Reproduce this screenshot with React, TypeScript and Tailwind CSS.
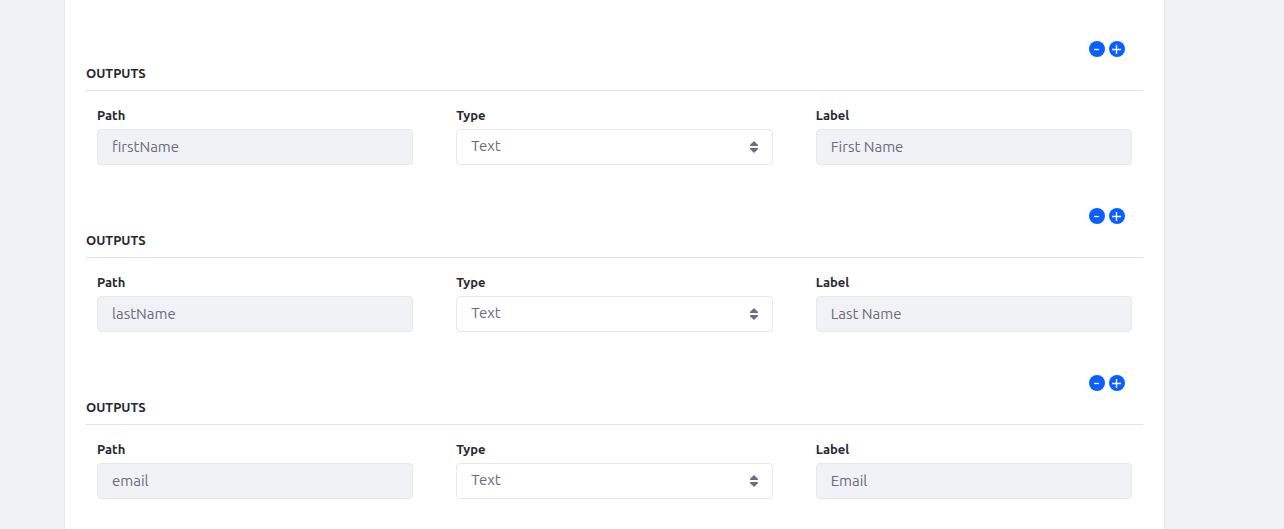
import { useId, useState } from "react";

type Output = { path: string; type: string; label: string };

const initialOutputs: Output[] = [
  { path: "firstName", type: "Text", label: "First Name" },
  { path: "lastName", type: "Text", label: "Last Name" },
  { path: "email", type: "Text", label: "Email" },
];

const labelClass = "mb-1 block text-[13px] leading-5 font-bold text-[#272833]";
const controlClass =
  "h-9 w-full rounded border border-[#e7e7ed] pb-0.5 text-[15px] text-[#6b6c7e] outline-none focus:border-[#80acff]";

function TextField({ label, value }: { label: string; value: string }) {
  const id = useId();
  return (
    <div>
      <label htmlFor={id} className={labelClass}>
        {label}
      </label>
      <input id={id} type="text" defaultValue={value} className={`${controlClass} bg-[#f1f2f5] px-3.5`} />
    </div>
  );
}

function TypeField({ value }: { value: string }) {
  const id = useId();
  return (
    <div>
      <label htmlFor={id} className={labelClass}>
        Type
      </label>
      <div className="relative">
        <select id={id} defaultValue={value} className={`${controlClass} block appearance-none bg-white pr-8 pl-3.5`}>
          <option>Text</option>
        </select>
        <svg
          aria-hidden="true"
          viewBox="0 0 8 12"
          className="pointer-events-none absolute top-3 right-3.5 h-3 w-2.5 fill-[#6b6c7e]"
        >
          <path d="M4 0 7.800 3.700Q8.600 5 7.300 5H.7Q-.6 5 .2 3.700Z" />
          <path d="M4 12 7.800 8.300Q8.600 7 7.300 7H.7Q-.6 7 .2 8.300Z" />
        </svg>
      </div>
    </div>
  );
}

function RoundButton({ kind, onClick }: { kind: "remove" | "add"; onClick: () => void }) {
  return (
    <button
      type="button"
      aria-label={kind === "add" ? "Add output" : "Remove output"}
      onClick={onClick}
      className="size-4 rounded-full bg-[#0b5fff]"
    >
      <svg viewBox="0 0 16 16" fill="none" stroke="white" strokeWidth="1.3" className="size-4">
        {kind === "add" ? <path d="M3 8.500H12M7.500 4V13" /> : <path d="M5 8.500H10" />}
      </svg>
    </button>
  );
}

export default function App() {
  const [outputs, setOutputs] = useState(initialOutputs);
  const remove = (index: number) => setOutputs(outputs.filter((_, i) => i !== index));
  const add = (index: number) =>
    setOutputs([...outputs.slice(0, index + 1), { path: "", type: "Text", label: "" }, ...outputs.slice(index + 1)]);

  return (
    <div className="flex min-h-screen bg-[#f1f2f5] pr-[119px] pl-16 font-['Ubuntu','Noto_Sans',sans-serif]">
      <main className="flex min-w-0 flex-1 flex-col gap-[43px] border-x border-[#e7e7ed] bg-white px-[21px] pt-[41px] pb-[30px]">
        {outputs.map((output, index) => (
          <section key={index}>
            <div className="flex justify-end gap-1 pr-[18px]">
              <RoundButton kind="remove" onClick={() => remove(index)} />
              <RoundButton kind="add" onClick={() => add(index)} />
            </div>
            <h2 className="mt-1.5 border-b border-[#e2e2e4] pb-[7px] text-[13px] leading-5 font-bold text-[#272833]">
              OUTPUTS
            </h2>
            <div className="mt-3.5 grid grid-cols-3 gap-[43px] px-[11px]">
              <TextField label="Path" value={output.path} />
              <TypeField value={output.type} />
              <TextField label="Label" value={output.label} />
            </div>
          </section>
        ))}
      </main>
    </div>
  );
}
